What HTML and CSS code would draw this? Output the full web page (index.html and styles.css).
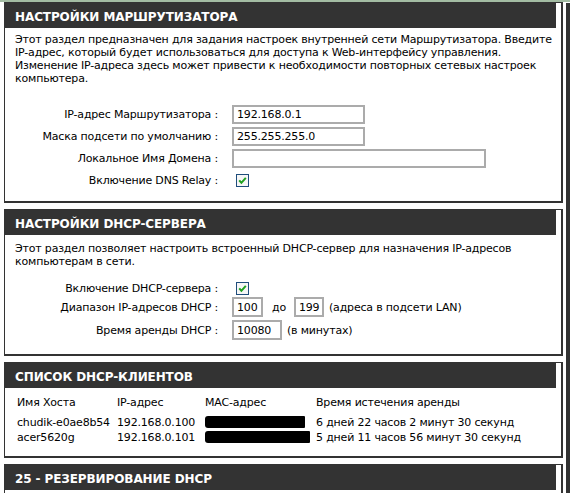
FILE: index.html
```html
<!DOCTYPE html>
<html lang="ru">
<head>
<meta charset="utf-8">
<title>Настройки сети</title>
<link rel="stylesheet" href="styles.css">
</head>
<body>
<div class="topline"></div>
<div class="layout">
  <main class="content">
    <section class="box">
      <h2 class="box-title">НАСТРОЙКИ МАРШРУТИЗАТОРА</h2>
      <div class="box-body body-1">
        <p class="intro">Этот раздел предназначен для задания настроек внутренней сети Маршрутизатора. Введите IP-адрес, который будет использоваться для доступа к Web-интерфейсу управления. Изменение IP-адреса здесь может привести к необходимости повторных сетевых настроек компьютера.</p>
        <div class="form form-1">
          <div class="row"><label class="lbl">IP-адрес Маршрутизатора :</label><input class="field w133" type="text" value="192.168.0.1"></div>
          <div class="row"><label class="lbl">Маска подсети по умолчанию :</label><input class="field w133" type="text" value="255.255.255.0"></div>
          <div class="row"><label class="lbl">Локальное Имя Домена :</label><input class="field w254" type="text" value=""></div>
          <div class="row row-cb"><label class="lbl">Включение DNS Relay :</label><span class="cb"><svg width="13" height="13" viewBox="0 0 13 13"><rect x="0.5" y="0.5" width="12" height="12" fill="#f6f6f6" stroke="#1f4d7c"/><path d="M3.2 6.4 L5.4 8.8 L9.8 3.8" fill="none" stroke="#1fa11f" stroke-width="2"/></svg></span></div>
        </div>
      </div>
    </section>

    <section class="box">
      <h2 class="box-title">НАСТРОЙКИ DHCP-СЕРВЕРА</h2>
      <div class="box-body body-2">
        <p class="intro intro-2">Этот раздел позволяет настроить встроенный DHCP-сервер для назначения IP-адресов компьютерам в сети.</p>
        <div class="form form-2">
          <div class="row row-cb2"><label class="lbl">Включение DHCP-сервера :</label><span class="cb"><svg width="13" height="13" viewBox="0 0 13 13"><rect x="0.5" y="0.5" width="12" height="12" fill="#f6f6f6" stroke="#1f4d7c"/><path d="M3.2 6.4 L5.4 8.8 L9.8 3.8" fill="none" stroke="#1fa11f" stroke-width="2"/></svg></span></div>
          <div class="row"><label class="lbl">Диапазон IP-адресов DHCP :</label><input class="field w31" type="text" value="100"><span class="sep">до</span><input class="field w30" type="text" value="199"><span class="note">(адреса в подсети LAN)</span></div>
          <div class="row"><label class="lbl">Время аренды DHCP :</label><input class="field w50" type="text" value="10080"><span class="note">(в минутах)</span></div>
        </div>
      </div>
    </section>

    <section class="box">
      <h2 class="box-title">СПИСОК DHCP-КЛИЕНТОВ</h2>
      <div class="box-body body-3">
        <div class="clients">
          <div class="crow chead"><span>Имя Хоста</span><span>IP-адрес</span><span>MAC-адрес</span><span>Время истечения аренды</span></div>
          <div class="crow"><span>chudik-e0ae8b54</span><span>192.168.0.100</span><span><i class="redact r1"></i></span><span>6 дней 22 часов 2 минут 30 секунд</span></div>
          <div class="crow"><span>acer5620g</span><span>192.168.0.101</span><span><i class="redact r2"></i></span><span>5 дней 11 часов 56 минут 30 секунд</span></div>
        </div>
      </div>
    </section>

    <section class="box box-last">
      <h2 class="box-title">25 - РЕЗЕРВИРОВАНИЕ DHCP</h2>
      <div class="box-body"></div>
    </section>
  </main>
  <div class="edge"></div>
</div>
</body>
</html>
```

FILE: styles.css
```css
html, body {
  margin: 0;
  padding: 0;
  background: #ffffff;
}

body {
  font-family: "DejaVu Sans", sans-serif;
  font-size: 11px;
  line-height: 13px;
  letter-spacing: -0.18px;
  color: #000000;
  overflow: hidden;
  height: 493px;
}

.topline {
  height: 2px;
  background: #a3bca3;
}

.layout {
  display: flex;
  padding-left: 4px;
  gap: 3px;
  height: 491px;
}

.content {
  flex: 1;
  display: flex;
  flex-direction: column;
  gap: 6px;
  min-width: 0;
}

.edge {
  width: 4px;
  background: #333333;
  margin-top: 1px;
}

.box {
  border: 1px solid #333333;
  border-right-width: 2px;
  border-bottom-width: 2px;
  background: #ffffff;
}

.box-last {
  flex: 1;
  border-bottom: none;
}

.box-title {
  margin: 0 5px 0 0;
  height: 25px;
  box-sizing: border-box;
  padding: 7px 0 0 10px;
  background: #333333;
  color: #ffffff;
  font-family: "DejaVu Sans", sans-serif;
  font-weight: bold;
  font-size: 12px;
  line-height: 14px;
  letter-spacing: -0.1px;
  white-space: nowrap;
}

.box-body {
  padding: 5px 6px 0 10px;
}

.body-1 {
  padding-bottom: 9px;
}

.body-2 {
  padding-top: 7px;
  padding-bottom: 11px;
}

.body-3 {
  padding: 7px 6px 11px 12px;
}

.intro {
  margin: 0 0 20px 0;
}

.intro-2 {
  margin-bottom: 12px;
}

.form {
  display: flex;
  flex-direction: column;
}

.row {
  display: flex;
  align-items: center;
  height: 19px;
  margin-bottom: 3px;
}

.form-2 .row {
  height: 20px;
}

.form-2 .row.row-cb2 {
  height: 17px;
  margin-bottom: 0;
}

.row-cb {
  height: 18px;
}

.lbl {
  width: 203px;
  flex: none;
  text-align: right;
  margin-right: 14px;
  white-space: nowrap;
}

.field {
  box-sizing: border-box;
  height: 100%;
  border: 2px solid #ababab;
  padding: 0 0 0 3px;
  margin: 0;
  font: inherit;
  letter-spacing: inherit;
  color: #000000;
  background: #ffffff;
  outline: none;
}

.w133 { width: 133px; }
.w254 { width: 254px; }
.w31 { width: 31px; }
.w30 { width: 30px; }
.w50 { width: 50px; }

.cb {
  display: flex;
  margin-left: 4px;
}

.sep {
  margin: 0 8px 0 9px;
}

.note {
  margin-left: 5px;
  white-space: nowrap;
}

.clients {
  display: flex;
  flex-direction: column;
}

.crow {
  display: grid;
  grid-template-columns: 100px 88px 111px auto;
  height: 15px;
  line-height: 15px;
  white-space: nowrap;
}

.chead {
  margin-bottom: 5px;
}

.redact {
  display: inline-block;
  background: #000000;
  height: 12px;
  vertical-align: -2px;
  border-radius: 3px 1px 1px 3px;
}

.r1 { width: 100px; }
.r2 { width: 105px; }
```
